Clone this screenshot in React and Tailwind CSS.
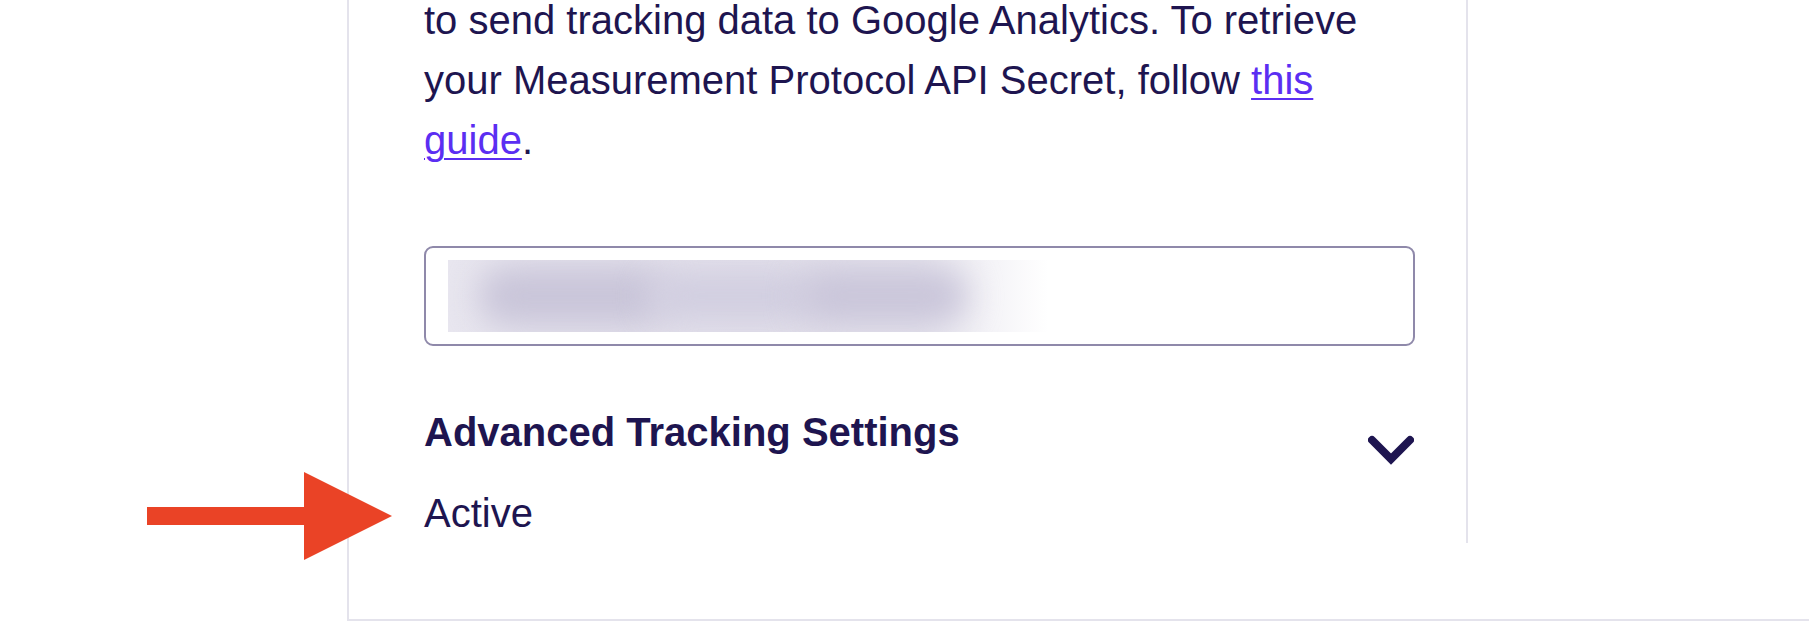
import React from "react";

const ink = "text-[#1e1550]";

const Chevron = () => (
  <svg width="46" height="32" viewBox="0 0 46 32" className="mt-[31px] mr-[1px] shrink-0">
    <polyline
      points="4,7 23,26 42,7"
      fill="none"
      stroke="#1e1550"
      strokeWidth="8"
      strokeLinecap="round"
      strokeLinejoin="miter"
    />
  </svg>
);

const RedArrow = () => (
  <svg
    width="246"
    height="88"
    viewBox="0 0 246 88"
    className="absolute left-[147px] top-[472px]"
  >
    <rect x="0" y="35" width="160" height="18" fill="#ea4326" />
    <polygon points="157,0 245,44 157,88" fill="#ea4326" />
  </svg>
);

// blurred-out secret value
const BlurredValue = () => (
  <div className="flex h-[72px] w-[600px] items-center overflow-hidden bg-[linear-gradient(90deg,#e8e6ef_0%,#e2dfea_50%,#e6e4ed_78%,#ffffff_100%)] pl-[30px]">
    <div className="h-[60px] w-[190px] shrink-0 rounded-full bg-[#c9c5d9] blur-[16px]" />
    <div className="-ml-[20px] h-[50px] w-[170px] shrink-0 rounded-full bg-[#d1cee0] blur-[16px]" />
    <div className="-ml-[20px] h-[58px] w-[170px] shrink-0 rounded-full bg-[#cac6da] blur-[16px]" />
  </div>
);

export default function App() {
  return (
    <div className="relative h-[644px] w-full overflow-hidden bg-white font-['Liberation_Sans',Arial,sans-serif]">
      <div className="ml-[347px] border-b-2 border-l-2 border-[#e4e3ec] pb-[76px]">
        <div className={`w-[1119px] border-r-2 border-[#e4e3ec] pl-[75px] pr-[51px] ${ink}`}>
          <p className="-mt-[10px] text-[40px] leading-[60px]">
            to send tracking data to Google Analytics. To retrieve your Measurement Protocol API Secret, follow{" "}
            <a href="#" className="text-[#5b2ef2] underline decoration-2 underline-offset-[4px]">
              this guide
            </a>
            .
          </p>

          <div className="mt-[76px] flex h-[100px] items-center rounded-[9px] border-2 border-[#8f89aa] px-[22px]">
            <BlurredValue />
          </div>

          <div className="mt-[56px] flex items-start justify-between">
            <h3 className="text-[40px] font-bold leading-[60px]">Advanced Tracking Settings</h3>
            <Chevron />
          </div>
          <div className="mt-[18px] text-[40px] leading-[60px]">Active</div>
        </div>
      </div>
      <RedArrow />
    </div>
  );
}
